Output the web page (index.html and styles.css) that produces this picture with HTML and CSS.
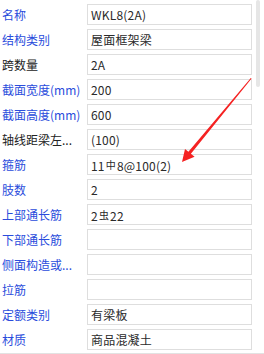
FILE: index.html
```html
<!DOCTYPE html>
<html lang="zh-CN">
<head>
    <meta charset="UTF-8">
    <meta name="viewport" content="width=device-width, initial-scale=1.0">
    <title>属性</title>
    <link rel="stylesheet" href="styles.css">
</head>
<body>
    <div class="panel">
        <div class="props">
            <div class="row"><span class="label blue">名称</span><span class="value">WKL8(2A)</span></div>
            <div class="row"><span class="label blue">结构类别</span><span class="value">屋面框架梁</span></div>
            <div class="row"><span class="label">跨数量</span><span class="value">2A</span></div>
            <div class="row"><span class="label blue">截面宽度(mm)</span><span class="value">200</span></div>
            <div class="row"><span class="label blue">截面高度(mm)</span><span class="value">600</span></div>
            <div class="row"><span class="label">轴线距梁左...</span><span class="value">(100)</span></div>
            <div class="row"><span class="label blue">箍筋</span><span class="value">11<span class="bar">中</span>8@100(2)</span></div>
            <div class="row"><span class="label blue">肢数</span><span class="value">2</span></div>
            <div class="row"><span class="label blue">上部通长筋</span><span class="value">2<span class="bar">虫</span>22</span></div>
            <div class="row"><span class="label blue">下部通长筋</span><span class="value"></span></div>
            <div class="row"><span class="label blue">侧面构造或...</span><span class="value"></span></div>
            <div class="row"><span class="label blue">拉筋</span><span class="value"></span></div>
            <div class="row"><span class="label blue">定额类别</span><span class="value">有梁板</span></div>
            <div class="row"><span class="label blue">材质</span><span class="value">商品混凝土</span></div>
        </div>
        <div class="scrollbar"></div>
    </div>

    <svg class="arrow" width="264" height="354" viewBox="0 0 264 354">
        <polygon fill="#f52222" points="251.6,78.6 190.9,153.8 194.6,156.8 182,162 185,149 188.4,151.8 250.8,78"/>
    </svg>
</body>
</html>
```

FILE: styles.css
```css
body {
    margin: 0;
    background-color: #fff;
    font-family: "Noto Sans CJK SC", "Noto Sans", sans-serif;
    font-size: 12px;
    color: #333;
    width: 264px;
    height: 354px;
    overflow: hidden;
}
.panel {
    display: flex;
    height: 353px;
    border-bottom: 1px solid #e2e2e2;
}
.props {
    display: flex;
    flex-direction: column;
    gap: 4px;
    padding-top: 4px;
    width: 256px;
}
.row {
    display: flex;
    align-items: center;
    height: 21px;
}
.label {
    width: 85px;
    padding-left: 2px;
    white-space: nowrap;
    overflow: hidden;
    color: #222;
}
.label.blue {
    color: #2a4cdc;
}
.value {
    box-sizing: border-box;
    width: 165px;
    height: 21px;
    border: 1px solid #dedede;
    padding: 0 3px;
    line-height: 19px;
    white-space: nowrap;
    color: #2a2a2a;
    letter-spacing: 0.2px;
}
.bar {
    font-size: 10px;
    vertical-align: 2px;
    margin: 0 1px;
}
.scrollbar {
    width: 4px;
    height: 87px;
    background-color: #e6e6e6;
    border-radius: 2px;
}
.arrow {
    position: absolute;
    left: 0;
    top: 0;
}
```
